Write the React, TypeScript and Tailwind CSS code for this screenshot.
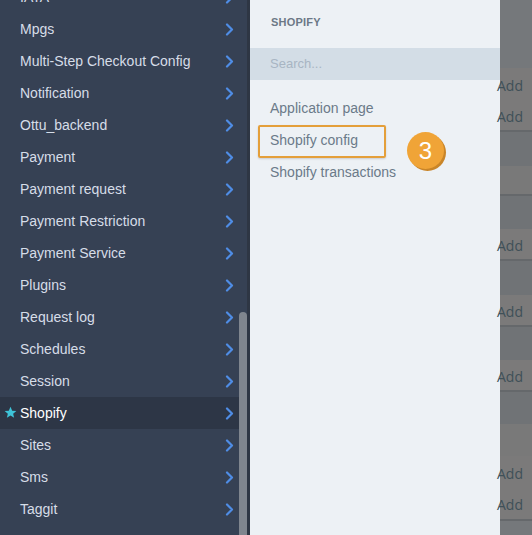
import React from "react";

const items = [
  "IATA",
  "Mpgs",
  "Multi-Step Checkout Config",
  "Notification",
  "Ottu_backend",
  "Payment",
  "Payment request",
  "Payment Restriction",
  "Payment Service",
  "Plugins",
  "Request log",
  "Schedules",
  "Session",
  "Shopify",
  "Sites",
  "Sms",
  "Taggit",
  "Tasks",
];

function Chevron() {
  return (
    <svg width="9" height="13" viewBox="0 0 9 13" className="shrink-0">
      <polyline points="2,1.5 7,6.5 2,11.5" fill="none" stroke="#4f8de6" strokeWidth="2.2" strokeLinecap="round" strokeLinejoin="round" />
    </svg>
  );
}

function Star() {
  return (
    <svg width="13" height="13" viewBox="0 0 24 24">
      <path d="M12 1.5l3.1 7.1 7.7.6-5.9 5 1.8 7.5L12 17.7l-6.7 4 1.8-7.5-5.9-5 7.7-.6z" fill="#3ec3d8" />
    </svg>
  );
}

type Band = { h: number; c: string; add?: boolean; line?: boolean };
const bands: Band[] = [
  { h: 68, c: "#75787b" },
  { h: 32, c: "#7b7a7a", add: true },
  { h: 32, c: "#7b7a7a", add: true, line: true },
  { h: 34, c: "#707376" },
  { h: 30, c: "#797979", line: true },
  { h: 33, c: "#707376" },
  { h: 32, c: "#7b7a7a", add: true, line: true },
  { h: 34, c: "#707376" },
  { h: 32, c: "#7b7a7a", add: true, line: true },
  { h: 33, c: "#707376" },
  { h: 32, c: "#7b7a7a", add: true, line: true },
  { h: 32, c: "#707376" },
  { h: 32, c: "#797979" },
  { h: 32, c: "#7b7a7a", add: true },
  { h: 33, c: "#7b7a7a", add: true, line: true },
  { h: 20, c: "#75787b" },
];

export default function App() {
  return (
    <div
      className="w-[532px] h-[535px] flex overflow-hidden"
      style={{ fontFamily: '"Liberation Sans", Arial, sans-serif' }}
    >
      <div className="relative w-[250px] h-full bg-[#364154] overflow-hidden shrink-0">
        <div className="mt-[-19px] flex flex-col">
          {items.map((name) => {
            const active = name === "Shopify";
            return (
              <div
                key={name}
                className={`relative h-[32px] flex items-center pl-[20px] pr-[16px] justify-between ${
                  active ? "bg-[#2d3646] text-white" : "text-[#d6dde8]"
                }`}
              >
                {active && (
                  <span className="absolute left-[4px] top-[9px] flex">
                    <Star />
                  </span>
                )}
                <span className="text-[14px] leading-none">{name}</span>
                <Chevron />
              </div>
            );
          })}
        </div>
        <div className="absolute right-0 top-0 bottom-0 w-[3px] bg-[#2e3644]" />
        <div className="absolute left-[239px] top-[312px] bottom-0 w-[8px] rounded-t-full bg-[#7f858e]" />
      </div>

      <div className="w-[250px] h-full bg-[#edf1f5] shrink-0 flex flex-col">
        <div className="h-[48px] pl-[21px] pt-[14px] text-[11px] font-bold text-[#6c7886] tracking-[0.2px]">
          SHOPIFY
        </div>
        <div className="h-[32px] bg-[#d3dde6] flex items-center pl-[20px] text-[13px] text-[#a8b5c3]">
          Search...
        </div>
        <div className="flex flex-col pt-[12px] relative">
          <div className="h-[32px] flex items-center pl-[20px] text-[14px] text-[#6b7a89]">
            Application page
          </div>
          <div className="h-[32px] flex items-center pl-[20px] text-[14px] text-[#6b7a89] relative">
            <span className="absolute left-[8px] top-[1px] w-[128px] h-[33px] border-2 border-[#e49f3a] rounded-[2px] shadow-[0_1px_2px_rgba(0,0,0,0.15)]" />
            Shopify config
            <span className="absolute left-[157px] top-[8px] w-[37px] h-[37px] rounded-full bg-[#c98528] translate-x-[2px] translate-y-[2px]" />
            <span className="absolute left-[157px] top-[8px] w-[37px] h-[37px] rounded-full bg-[#f0a437] flex items-center justify-center text-white text-[24px]">
              3
            </span>
          </div>
          <div className="h-[32px] flex items-center pl-[20px] text-[14px] text-[#6b7a89]">
            Shopify transactions
          </div>
        </div>
      </div>

      <div className="flex-1 h-full flex flex-col bg-[#75787b]">
        {bands.map((b, i) => (
          <div
            key={i}
            className={`shrink-0 flex items-center text-[#3f5058] ${b.line ? "border-b-2 border-[#65686b]" : ""}`}
            style={{ height: b.h, backgroundColor: b.c }}
          >
            {b.add && (
              <span
                className="ml-[-3px] pt-[2px] text-[14px]"
                style={{ fontFamily: '"Open Sans", sans-serif', color: "#3f5058" }}
              >
                Add
              </span>
            )}
          </div>
        ))}
      </div>
    </div>
  );
}
